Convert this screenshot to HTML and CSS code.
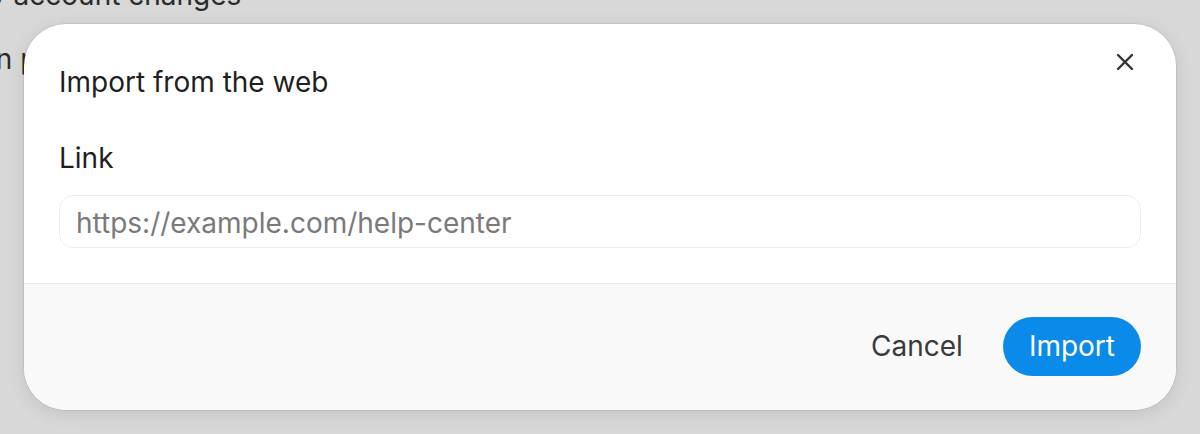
FILE: index.html
```html
<!DOCTYPE html>
<html lang="en">
<head>
<meta charset="utf-8">
<title>Import from the web</title>
<link rel="stylesheet" href="styles.css">
</head>
<body>
<div class="page">
  <p class="bg-line bg-top">y account changes</p>
  <p class="bg-line bg-mid">on privacy</p>
</div>
<div class="dialog" role="dialog" aria-labelledby="dlg-title">
  <div class="dialog-body">
    <div class="dialog-head">
      <h2 id="dlg-title" class="dialog-title">Import from the web</h2>
      <button class="close-btn" aria-label="Close">
        <svg width="18" height="18" viewBox="0 0 18 18" fill="none" stroke="#333" stroke-width="2.4" stroke-linecap="round"><path d="M2 2L16 16M16 2L2 16"/></svg>
      </button>
    </div>
    <label class="field-label" for="link">Link</label>
    <input id="link" class="field-input" type="text" placeholder="https://example.com/help-center">
  </div>
  <div class="dialog-foot">
    <button class="btn btn-ghost">Cancel</button>
    <button class="btn btn-primary">Import</button>
  </div>
</div>
</body>
</html>
```
FILE: styles.css
```css
* { box-sizing: border-box; }
html, body { margin: 0; height: 100%; }
body {
  background: #d8d8d8;
  font-family: Inter, "Noto Sans", sans-serif;
  color: #1f1f1f;
  overflow: hidden;
}
.page {
  padding: 0;
}
.bg-line {
  margin: 0;
  font-size: 28px;
  line-height: 36px;
  color: #2a2a2a;
  white-space: nowrap;
}
.bg-top {
  margin-top: -23px;
  margin-left: -10px;
}
.bg-mid {
  margin-top: 28px;
  margin-left: -21px;
}
.dialog {
  position: absolute;
  left: 24px;
  top: 24px;
  width: 1152px;
  height: 386px;
  background: #fff;
  border-radius: 42px;
  overflow: hidden;
  display: flex;
  flex-direction: column;
  box-shadow: 0 0 0 1px rgba(0,0,0,0.06), 0 4px 18px rgba(0,0,0,0.10);
}
.dialog-body {
  padding: 40px 35px 35px 35px;
  display: flex;
  flex-direction: column;
}
.dialog-head {
  display: flex;
  justify-content: space-between;
  align-items: flex-start;
}
.dialog-title {
  margin: 0;
  font-size: 28px;
  line-height: 36px;
  font-weight: 400;
  color: #1f1f1f;
}
.close-btn {
  border: 0;
  background: none;
  padding: 0;
  margin: -11px 7px 0 0;
  width: 18px;
  height: 18px;
  display: flex;
  cursor: pointer;
}
.field-label {
  margin-top: 40px;
  font-size: 28px;
  line-height: 36px;
  font-weight: 400;
  color: #1f1f1f;
}
.field-input {
  margin-top: 19px;
  height: 53px;
  border: 1px solid #ececec;
  border-radius: 14px;
  padding: 2px 16px 0;
  font-family: inherit;
  font-size: 28px;
  color: #1f1f1f;
  background: #fff;
  outline: none;
}
.field-input::placeholder { color: #7a7a7a; }
.dialog-foot {
  flex: 1;
  background: #f9f9f9;
  border-top: 1px solid #ebebeb;
  display: flex;
  justify-content: flex-end;
  align-items: center;
  gap: 14px;
  padding: 0 35px 2px;
}
.btn {
  font-family: inherit;
  font-size: 28px;
  border: 0;
  cursor: pointer;
  height: 59px;
  border-radius: 30px;
  padding: 0 26px;
}
.btn-ghost {
  background: transparent;
  color: #3a3a3a;
}
.btn-primary {
  background: #0a8ae9;
  color: #fff;
  font-weight: 400;
}
```
